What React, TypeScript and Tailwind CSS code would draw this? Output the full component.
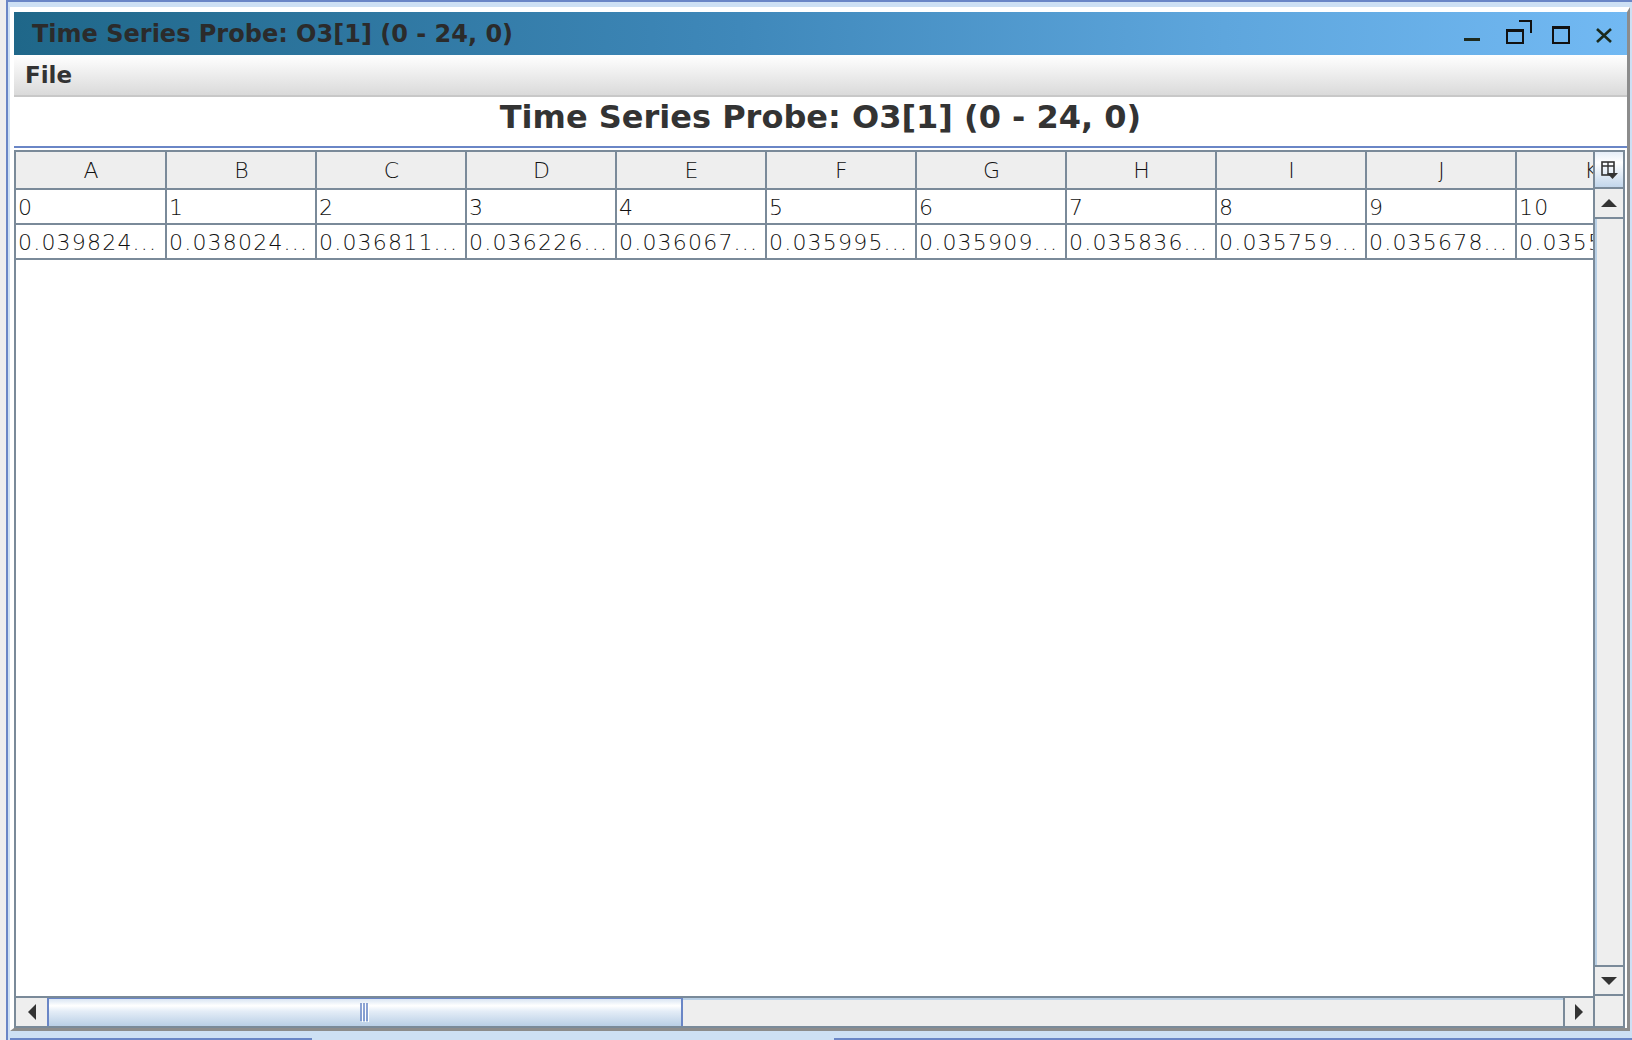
import React from 'react';

const columns = ['A', 'B', 'C', 'D', 'E', 'F', 'G', 'H', 'I', 'J', 'K'];
const values = [
  '0.039824...',
  '0.038024...',
  '0.036811...',
  '0.036226...',
  '0.036067...',
  '0.035995...',
  '0.035909...',
  '0.035836...',
  '0.035759...',
  '0.035678...',
  '0.035597...',
];

const title = 'Time Series Probe: O3[1] (0 - 24, 0)';

const WindowButtons = () => (
  <svg width="160" height="43" viewBox="0 0 160 43" className="shrink-0">
    {/* minimize */}
    <rect x="4" y="26" width="16" height="3" fill="#1e2a1e" />
    {/* restore */}
    <rect x="46" y="17" width="18" height="3" fill="#111" />
    <rect x="46" y="17" width="2" height="15" fill="#111" />
    <rect x="62" y="17" width="2" height="15" fill="#111" />
    <rect x="46" y="30" width="18" height="2" fill="#111" />
    <rect x="59" y="8" width="13" height="2" fill="#111" />
    <rect x="70" y="8" width="2" height="13" fill="#111" />
    {/* maximize */}
    <rect x="92" y="14" width="18" height="3" fill="#111" />
    <rect x="92" y="14" width="2" height="18" fill="#111" />
    <rect x="108" y="14" width="2" height="18" fill="#111" />
    <rect x="92" y="30" width="18" height="2" fill="#111" />
    {/* close */}
    <path d="M137 17 L151 30 M151 17 L137 30" stroke="#1b2a1b" strokeWidth="2.6" />
  </svg>
);

const Arrow = ({ dir }: { dir: 'up' | 'down' | 'left' | 'right' }) => {
  if (dir === 'up')
    return (
      <svg width="16" height="8" viewBox="0 0 16 8">
        <path d="M8 0 L16 8 L0 8 Z" fill="#333" />
      </svg>
    );
  if (dir === 'down')
    return (
      <svg width="16" height="8" viewBox="0 0 16 8">
        <path d="M0 0 L16 0 L8 8 Z" fill="#333" />
      </svg>
    );
  if (dir === 'left')
    return (
      <svg width="8" height="16" viewBox="0 0 8 16">
        <path d="M8 0 L8 16 L0 8 Z" fill="#333" />
      </svg>
    );
  return (
    <svg width="8" height="16" viewBox="0 0 8 16">
      <path d="M0 0 L8 8 L0 16 Z" fill="#333" />
    </svg>
  );
};

const ColumnControl = () => (
  <svg width="20" height="22" viewBox="0 0 20 22">
    <rect x="3" y="3" width="12" height="13" fill="none" stroke="#333" strokeWidth="1.6" />
    <path d="M3 7 H15 M9 3 V16" stroke="#333" strokeWidth="1.4" />
    <path d="M8 14 H19 L13.5 20 Z" fill="#333" />
  </svg>
);

export default function App() {
  return (
    <div className="flex h-[1040px] w-[1632px] overflow-hidden bg-[#eeeeee] pl-[6px] font-['DejaVu_Sans',sans-serif] text-[#333333]">
      <div className="flex flex-1 flex-col border-l-2 border-t-2 border-[#6a86c6] bg-[#cde0f4] pl-[2px] pt-[5px]">
        {/* window */}
        <div className="flex h-[1024px] w-[1620px] flex-col border-b-[3px] border-l-4 border-r-[3px] border-t-[5px] border-b-[#8c8c8c] border-l-white border-r-[#8c8c8c] border-t-white bg-white">
          {/* title bar */}
          <div className="flex h-[43px] shrink-0 items-center bg-[linear-gradient(to_right,#1f6789_0%,#3f88ba_45%,#5ea6dd_75%,#72b9f3_100%)] pl-[18px] pr-[7px]">
            <span className="text-[24px] font-bold leading-none text-[#2b2b2b]">{title}</span>
            <div className="ml-auto">
              <WindowButtons />
            </div>
          </div>

          {/* menu bar */}
          <div className="flex h-[40px] shrink-0 items-center bg-[linear-gradient(to_bottom,#ffffff_0%,#f4f4f4_30%,#dadada_100%)] pl-[11px]">
            <span className="text-[23px] font-bold leading-none text-[#333]">File</span>
          </div>
          <div className="h-[2px] shrink-0 bg-[#c8c8c8]" />

          {/* heading */}
          <div className="flex h-[49px] shrink-0 justify-center pt-[2px]">
            <span className="text-[32px] font-bold leading-[37px] text-[#333]">{title}</span>
          </div>
          <div className="h-[2px] shrink-0 bg-[#6a86c6]" />
          <div className="h-[2px] shrink-0 bg-white" />

          {/* scroll pane */}
          <div className="mr-[2px] flex min-h-0 flex-1 border-2 border-[#7a8a99]">
            <div className="flex min-w-0 flex-1 flex-col">
              {/* viewport */}
              <div className="min-h-0 flex-1 overflow-hidden bg-white text-[22px] font-light tracking-[1.2px] text-[#111]">
                <div className="flex w-max">
                  {columns.map((c, i) => (
                    <div
                      key={c}
                      className={`flex h-[38px] items-center justify-center border-b-2 border-r-2 border-[#7a8a99] bg-[#eeeeee] pl-[2px] ${i === 0 ? 'w-[151px]' : 'w-[150px]'}`}
                    >
                      {c}
                    </div>
                  ))}
                </div>
                <div className="flex w-max">
                  {columns.map((c, i) => (
                    <div
                      key={c}
                      className={`flex h-[35px] items-center border-b-2 border-r-2 border-[#7a8a99] pl-[2px] pt-[2px] ${i === 0 ? 'w-[151px]' : 'w-[150px]'}`}
                    >
                      {i}
                    </div>
                  ))}
                </div>
                <div className="flex w-max">
                  {values.map((v, i) => (
                    <div
                      key={i}
                      className={`flex h-[35px] items-center overflow-hidden whitespace-nowrap border-b-2 border-r-2 border-[#7a8a99] pl-[2px] pt-[2px] ${i === 0 ? 'w-[151px]' : 'w-[150px]'}`}
                    >
                      {v}
                    </div>
                  ))}
                </div>
              </div>

              {/* horizontal scrollbar */}
              <div className="flex h-[30px] shrink-0 border-t-2 border-[#7a8a99]">
                <div className="flex w-[31px] items-center justify-center bg-[#eeeeee]">
                  <Arrow dir="left" />
                </div>
                <div className="flex w-[636px] items-center justify-center border-x-2 border-t border-[#6a86c6] bg-[linear-gradient(to_bottom,#dbe6f3_0%,#ffffff_25%,#e4edf7_45%,#b9cfe6_100%)]">
                  <svg width="10" height="19" viewBox="0 0 10 19">
                    <path d="M1 0 V18 M4 0 V18 M7 0 V18" stroke="#6a86c6" strokeWidth="1.5" />
                    <path d="M2.5 1 V19 M5.5 1 V19 M8.5 1 V19" stroke="#ffffff" strokeWidth="1" />
                  </svg>
                </div>
                <div className="flex-1 border-t-2 border-[#b8cfe5] bg-[#eeeeee]" />
                <div className="flex w-[30px] items-center justify-center border-l-2 border-[#7a8a99] bg-[#eeeeee]">
                  <Arrow dir="right" />
                </div>
              </div>
            </div>

            {/* vertical scrollbar */}
            <div className="flex w-[30px] shrink-0 flex-col border-l-2 border-[#7a8a99]">
              <div className="flex h-[37px] shrink-0 items-center justify-center border-b-2 border-[#7a8a99] bg-[linear-gradient(to_bottom,#e6eef8_0%,#ffffff_30%,#c2d6eb_100%)]">
                <ColumnControl />
              </div>
              <div className="flex h-[30px] shrink-0 items-center justify-center border-b-2 border-[#7a8a99] bg-[#eeeeee]">
                <Arrow dir="up" />
              </div>
              <div className="flex-1 border-l-2 border-[#b8cfe5] bg-[#eeeeee]" />
              <div className="flex h-[31px] shrink-0 items-center justify-center border-y-2 border-[#7a8a99] bg-[#eeeeee]">
                <Arrow dir="down" />
              </div>
              <div className="h-[30px] shrink-0 bg-[#eeeeee]" />
            </div>
          </div>
        </div>

        {/* desktop strip below the window */}
        <div className="flex flex-1 flex-col justify-end">
          <div className="flex h-[2px]">
            <div className="w-[302px] bg-[#6a86c6]" />
            <div className="w-[522px]" />
            <div className="flex-1 bg-[#6a86c6]" />
          </div>
        </div>
      </div>
    </div>
  );
}
